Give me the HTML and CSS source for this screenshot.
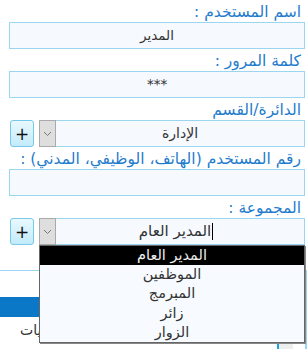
FILE: index.html
```html
<!DOCTYPE html>
<html lang="ar" dir="rtl">
<head>
	<meta charset="utf-8">
	<title>المستخدمين</title>
	<link rel="stylesheet" href="styles.css">
</head>
<body>
	<div class="form">
		<label class="lbl">اسم المستخدم :</label>
		<div class="field">المدير</div>

		<label class="lbl">كلمة المرور :</label>
		<div class="field">***</div>

		<label class="lbl">الدائرة/القسم</label>
		<div class="row">
			<div class="combo">
				<span class="val">الإدارة</span>
				<span class="arrow"><svg width="9" height="6" viewBox="0 0 9 6"><path d="M1 1l3.5 3.5L8 1" fill="none" stroke="#777" stroke-width="1"/></svg></span>
			</div>
			<button class="add">+</button>
		</div>

		<label class="lbl">رقم المستخدم (الهاتف، الوظيفي، المدني) :</label>
		<div class="field"></div>

		<label class="lbl">المجموعة :</label>
		<div class="row">
			<div class="combo open">
				<span class="val"><i class="caret"></i>المدير العام</span>
				<span class="arrow"><svg width="9" height="6" viewBox="0 0 9 6"><path d="M1 1l3.5 3.5L8 1" fill="none" stroke="#777" stroke-width="1"/></svg></span>
				<ul class="list">
					<li class="sel">المدير العام</li>
					<li>الموظفين</li>
					<li>المبرمج</li>
					<li>زائر</li>
					<li>الزوار</li>
				</ul>
			</div>
			<button class="add">+</button>
		</div>
	</div>

	<div class="panel">
		<div class="bar"></div>
		<div class="line"><span dir="rtl">الصلاحيات</span></div>
		<div class="scroll"></div>
	</div>
</body>
</html>
```

FILE: styles.css
```css
*{margin:0;padding:0;box-sizing:border-box;}
body{
	font-family:"DejaVu Sans",sans-serif;
	font-size:14px;
	background:#fff;
	overflow:hidden;
}
.form{
	padding:0 3px 0 9px;
}
.lbl{
	display:block;
	height:22px;
	padding-top:2px;
	line-height:20px;
	color:#1f7ccd;
	font-size:15.5px;
	padding-right:4px;
	white-space:nowrap;
}
.field{
	height:27px;
	border:1px solid #9ad6ef;
	background:#f6faff;
	color:#333;
	text-align:center;
	line-height:25px;
	font-size:13.5px;
}
.row{
	display:flex;
	align-items:flex-start;
	gap:5px;
}
.combo{
	position:relative;
	flex:1;
	height:27px;
	border:1px solid #9ad6ef;
	background:#f6faff;
	display:flex;
	color:#333;
	font-size:14px;
}
.combo .val{
	flex:1;
	text-align:center;
	line-height:25px;
}
.combo.open .val{
	font-size:15px;
	padding-right:8px;
}
.caret{
	display:inline-block;
	width:1px;
	height:17px;
	background:#000;
	vertical-align:-4px;
	margin-left:1px;
}
.combo .arrow{
	width:17px;
	margin:-1px 0 -1px -1px;
	background:#dedede;
	border:1px solid #aaa;
	display:flex;
	align-items:center;
	justify-content:center;
}
.add{
	width:24px;
	height:27px;
	margin-left:1px;
	border:1px solid #76c9e8;
	border-radius:3px;
	background:linear-gradient(#e9f8fe,#c3ebfa);
	font-family:"DejaVu Sans",sans-serif;
	font-size:17px;
	line-height:22px;
	color:#111;
}
.list{
	position:absolute;
	top:26px;
	left:-1px;
	right:-1px;
	z-index:5;
	list-style:none;
	background:#f7fbff;
	border:1px solid #666;
	box-shadow:1px 1px 0 #888;
	height:98px;
}
.list li{
	height:19.2px;
	line-height:19px;
	text-align:center;
	color:#333;
	font-size:14.5px;
}
.list li.sel{
	background:#000;
	color:#eee;
}
.panel{
	margin-top:25px;
	height:90px;
	border-top:1px solid #9ad6ef;
	border-right:2px solid #9ad6ef;
	margin-right:1px;
	position:relative;
}
.bar{
	margin-top:26px;
	height:20px;
	background:#0a78c6;
}
.line{
	height:24px;
	line-height:26px;
	padding-left:20px;
	direction:ltr;
	white-space:nowrap;
	color:#333;
	font-size:14px;
}
.scroll{
	position:absolute;
	right:12px;
	top:71px;
	width:16px;
	height:20px;
	background:#eee;
	border-left:2px solid #1aa3e8;
}
```
